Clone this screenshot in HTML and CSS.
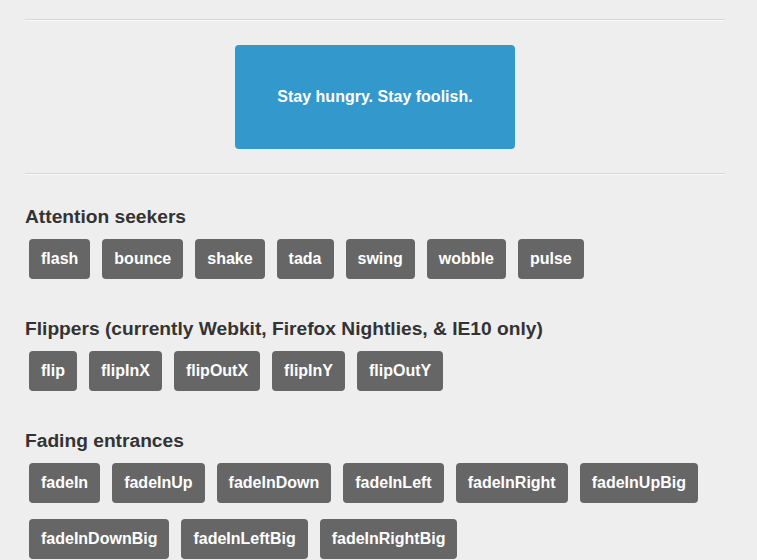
FILE: index.html
```html
<!DOCTYPE html>
<html>
<head>
<meta charset="utf-8">
<link rel="stylesheet" href="styles.css">
</head>
<body>
<div class="page">
  <hr class="rule">
  <div class="hero"><span class="hero-text">Stay hungry. Stay foolish.</span></div>
  <hr class="rule">
  <section class="group group-first">
    <h2 class="group-title">Attention seekers</h2>
    <div class="buttons">
      <span class="btn">flash</span><span class="btn">bounce</span><span class="btn">shake</span><span class="btn">tada</span><span class="btn">swing</span><span class="btn">wobble</span><span class="btn">pulse</span>
    </div>
  </section>
  <section class="group">
    <h2 class="group-title">Flippers (currently Webkit, Firefox Nightlies, &amp; IE10 only)</h2>
    <div class="buttons">
      <span class="btn">flip</span><span class="btn">flipInX</span><span class="btn">flipOutX</span><span class="btn">flipInY</span><span class="btn">flipOutY</span>
    </div>
  </section>
  <section class="group">
    <h2 class="group-title">Fading entrances</h2>
    <div class="buttons">
      <span class="btn">fadeIn</span><span class="btn">fadeInUp</span><span class="btn">fadeInDown</span><span class="btn">fadeInLeft</span><span class="btn">fadeInRight</span><span class="btn">fadeInUpBig</span><span class="btn">fadeInDownBig</span><span class="btn">fadeInLeftBig</span><span class="btn">fadeInRightBig</span>
    </div>
  </section>
</div>
</body>
</html>
```

FILE: styles.css
```css
html, body {
  margin: 0;
  padding: 0;
  background: #eeeeee;
}
body {
  font-family: "Liberation Sans", Arial, sans-serif;
  color: #333333;
  overflow: hidden;
}
.page {
  width: 700px;
  margin-left: 25px;
  padding-top: 19px;
}
.rule {
  margin: 0;
  height: 0;
  border: 0;
  border-top: 1px solid #d6d6d6;
  border-bottom: 1px solid #fafafa;
}
.hero {
  width: 280px;
  height: 104px;
  margin: 24px auto 24px;
  background: #3399cc;
  border-radius: 4px;
  display: flex;
  align-items: center;
  justify-content: center;
}
.hero-text {
  color: #ffffff;
  font-weight: bold;
  font-size: 16px;
  line-height: 20px;
}
.group {
  margin-top: 39px;
}
.group-first {
  margin-top: 31px;
}
.group-title {
  margin: 0 0 11px;
  font-size: 19.2px;
  line-height: 22px;
  font-weight: bold;
  color: #333333;
}
.buttons {
  display: flex;
  flex-wrap: wrap;
  column-gap: 12px;
  row-gap: 16px;
  padding-left: 4px;
}
.btn {
  display: block;
  background: #666666;
  color: #ffffff;
  font-weight: bold;
  font-size: 16px;
  line-height: 20px;
  padding: 10px 12px;
  border-radius: 4px;
}
```
